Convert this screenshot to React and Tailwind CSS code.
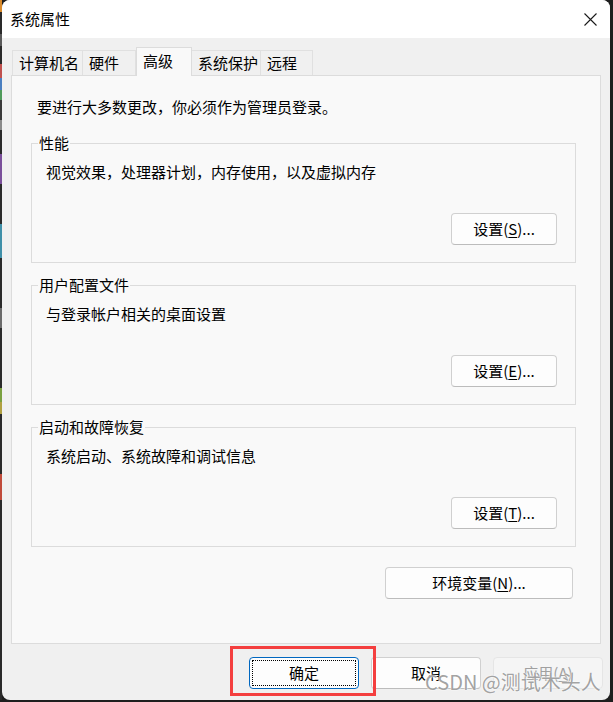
import React from 'react';

const tabs = [
    { label: '计算机名', w: 'w-[71px]' },
    { label: '硬件', w: 'w-[54px]' },
    { label: '高级', w: 'w-[56px]', active: true },
    { label: '系统保护', w: 'w-[70px]' },
    { label: '远程', w: 'w-[53px]' },
];

const groups = [
    { title: '性能', desc: '视觉效果，处理器计划，内存使用，以及虚拟内存', key: 'S' },
    { title: '用户配置文件', desc: '与登录帐户相关的桌面设置', key: 'E' },
    { title: '启动和故障恢复', desc: '系统启动、系统故障和调试信息', key: 'T' },
];

const strip = [
    ['h-[12px]', 'bg-[#d98a2b]'], ['h-[22px]', 'bg-[#2a2a2a]'], ['h-[12px]', 'bg-[#5a5a5a]'],
    ['h-[18px]', 'bg-[#2a2a2a]'], ['h-[14px]', 'bg-[#c0504d]'], ['h-[12px]', 'bg-[#4a7fc0]'],
    ['h-[10px]', 'bg-[#4f9a5a]'], ['h-[20px]', 'bg-[#3a3a3a]'], ['h-[10px]', 'bg-[#8a8a8a]'],
    ['h-[24px]', 'bg-[#2a2a2a]'], ['h-[30px]', 'bg-[#7a4f9a]'], ['h-[40px]', 'bg-[#2a2a2a]'],
    ['h-[34px]', 'bg-[#3f8fa8]'], ['h-[50px]', 'bg-[#2a2a2a]'], ['h-[20px]', 'bg-[#6a6a6a]'],
    ['h-[60px]', 'bg-[#2a2a2a]'], ['h-[14px]', 'bg-[#7aa040]'], ['h-[12px]', 'bg-[#b0a040]'],
    ['h-[60px]', 'bg-[#2a2a2a]'], ['h-[26px]', 'bg-[#c04a3a]'], ['h-[200px]', 'bg-[#2a2a2a]'],
];

function Btn({ children, className = '' }) {
    return (
        <div className={`h-[32px] flex items-center justify-center rounded-[4px] border border-[#d0d0d0] border-b-[#bcbcbc] bg-[#fdfdfd] text-[15px] text-black ${className}`}>
            {children}
        </div>
    );
}

export default function App() {
    return (
        <div className="w-[613px] h-[702px] bg-[#1e1e1e] flex overflow-hidden" style={{ fontFamily: '"Noto Sans CJK SC", "Noto Sans", sans-serif' }}>
            <div className="w-[2px] flex flex-col">
                {strip.map(([h, c], i) => <div key={i} className={`${h} ${c} shrink-0`} />)}
            </div>

            <div className="w-[608px] h-[700px] bg-[#f0f0f0] rounded-[8px] flex flex-col overflow-hidden relative">
                {/* title bar */}
                <div className="h-[38px] bg-white flex items-center justify-between pl-[8px] pr-[12px] shrink-0">
                    <span className="text-[15px] text-black leading-[20px]">系统属性</span>
                    <svg width="13" height="13" viewBox="0 0 13 13" className="mr-[1px]">
                        <path d="M0.5 0.5 L12.5 12.5 M12.5 0.5 L0.5 12.5" stroke="#1a1a1a" strokeWidth="1.1" fill="none" />
                    </svg>
                </div>

                <div className="flex-1 flex flex-col px-[9px] pt-[9px]">
                    {/* tabs */}
                    <div className="flex items-end pl-[1px] h-[28px]">
                        {tabs.map(t => t.active ? (
                            <div key={t.label} className={`${t.w} h-[29px] -mb-px relative z-10 bg-[#f9f9f9] border border-b-0 border-[#dcdcdc] pl-[6px] pt-[3px] text-[15px] leading-[20px] text-black`}>
                                {t.label}
                            </div>
                        ) : (
                            <div key={t.label} className={`${t.w} h-[25px] bg-[#f0f0f0] border border-b-0 border-[#e0e0e0] pl-[6px] pt-[2px] text-[15px] leading-[20px] text-black -ml-px first:ml-0`}>
                                {t.label}
                            </div>
                        ))}
                    </div>

                    {/* panel */}
                    <div className="h-[569px] bg-[#f9f9f9] border border-[#dcdcdc] flex flex-col pl-[19px] pr-[24px] pt-[21px]">
                        <div className="ml-[6px] text-[15px] leading-[20px] text-black">要进行大多数更改，你必须作为管理员登录。</div>

                        {groups.map((g, i) => (
                            <fieldset key={g.title} className={`border border-[#dcdcdc] flex flex-col ${i === 0 ? 'mt-[16px]' : 'mt-[12px]'}`}>
                                <legend className="ml-[6px] px-[1px] text-[15px] leading-[20px] text-black">{g.title}</legend>
                                <div className="mt-[9px] pl-[14px] text-[15px] leading-[20px] text-black">{g.desc}</div>
                                <Btn className="w-[106px] self-end mr-[18px] mt-[31px] mb-[17px]">
                                    设置(<span className="underline underline-offset-2">{g.key}</span>)...
                                </Btn>
                            </fieldset>
                        ))}

                        <Btn className="w-[188px] self-end mr-[3px] mt-[20px]">
                            环境变量(<span className="underline underline-offset-2">N</span>)...
                        </Btn>
                    </div>

                    {/* bottom buttons */}
                    <div className="flex justify-end gap-[12px] mt-[13px] -mr-[2px]">
                        <div className="w-[110px] h-[32px] rounded-[4px] border border-[#0067c0] bg-[#fdfdfd] p-[2px]">
                            <div className="w-full h-full border border-dotted border-black flex items-center justify-center text-[15px] text-black">确定</div>
                        </div>
                        <Btn className="w-[110px]">取消</Btn>
                        <div className="w-[110px] h-[32px] flex items-center justify-center rounded-[4px] border border-[#e5e5e5] bg-[#f5f5f5] text-[15px] text-[#a0a0a0]">
                            应用(<span className="underline underline-offset-2">A</span>)
                        </div>
                    </div>
                </div>

                {/* annotation box */}
                <div className="absolute left-[228px] top-[646px] w-[146px] h-[50px] border-[3px] border-[#f43f3f]" />

                {/* watermark */}
                <div className="absolute left-[423px] top-[670px] text-[20px] leading-[24px] text-[#8a8a8a]/80 whitespace-nowrap" style={{ textShadow: '0 0 2px #fff, 0 0 1px #fff' }}>
                    CSDN @测试木头人
                </div>
            </div>
        </div>
    );
}
